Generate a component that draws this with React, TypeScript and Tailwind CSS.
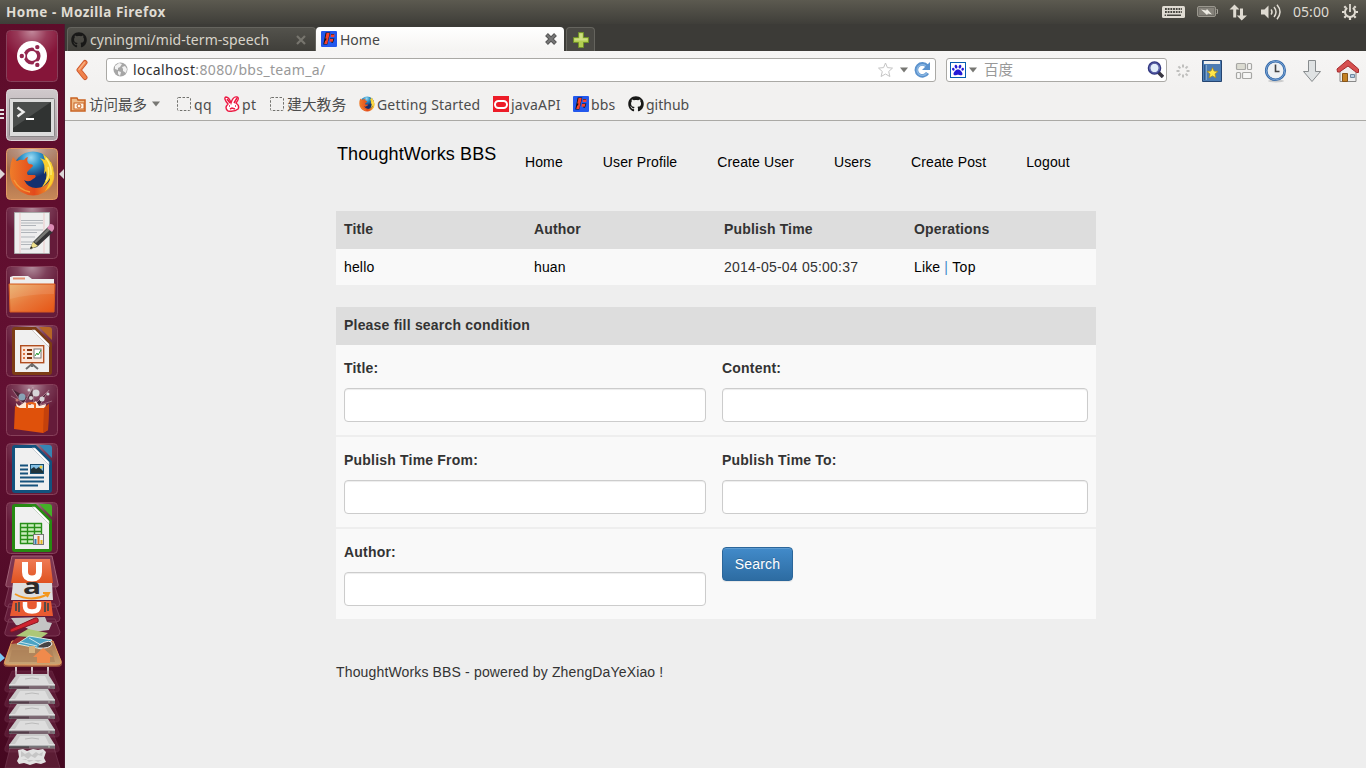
import type { ReactNode } from "react";
import { FaGithub, FaPaw } from "react-icons/fa";

const ui = "font-['Noto_Sans','Noto_Sans_CJK_SC',sans-serif]";

function TopBar() {
  return (
    <header className="flex h-6 shrink-0 items-center bg-gradient-to-b from-[#5c5a50] to-[#3f3e39] pl-1.5 text-[#dfdbd2]">
      <h1 className="text-[13.5px] leading-6 font-bold tracking-[0.48px]">Home - Mozilla Firefox</h1>
      <svg className="ml-auto" width="204" height="24" viewBox="1162 0 204 24">
        <rect x="1162" y="6" width="23" height="12" rx="1.5" fill="#dfdbd2" />
        <path d="M1165 9h17M1165 12h17" stroke="#45443e" strokeWidth="2" strokeDasharray="1.8 .9" />
        <path d="M1167 15.3h14M1164.6 15.3h1.5" stroke="#45443e" strokeWidth="1.6" />
        <rect x="1197.5" y="6.5" width="18" height="10" rx="1.5" fill="#6d6b64" stroke="#9a978e" />
        <path d="M1216.500 9.500h1v4h-1" fill="none" stroke="#aaa79e" />
        <rect x="1199" y="8" width="15" height="7" fill="#85827a" />
        <path d="M1201 9.500l5 1 1-1.500 5 5.500-4-1-1 1.500z" fill="#eceae2" />
        <path d="M1234.500 4.500l5 5h-3.300v8h-3v-8h-3.700zM1241.700 20.500l-5-5h3.300v-7h3v7h4z" fill="#dfdbd2" />
        <path d="M1261 9.500h3.500l4-4v13l-4-4h-3.500z" fill="#dfdbd2" />
        <path d="M1271 9.500q2 2.500 0 5M1274 7q4 5 0 10M1277 4.800q6 7 0 14.500" fill="none" stroke="#dfdbd2" strokeWidth="1.5" />
        <text x="1293" y="17" fontSize="14" textLength="36" fill="#dfdbd2">05:00</text>
        <g fill="none" stroke="#dfdbd2">
          <path d="M1347.200 7.800a5 5 0 1 0 5.600 0" strokeWidth="2" />
          <path d="M1350 4v8" strokeWidth="1.8" />
          <path d="M1344.500 12h-2.500M1358 12h-2.500M1346 16l-1.700 1.700M1354 16l1.700 1.700M1350 17v3M1345.800 7.800l-1.500-1.500M1354.200 7.800l1.500-1.500" strokeWidth="2.200" />
        </g>
      </svg>
    </header>
  );
}

function Tile({ children, kind = "plain" }: { children: ReactNode; kind?: "plain" | "ubuntu" | "terminal" | "firefox" }) {
  return (
    <svg width="65" height="59" viewBox="0 0 65 59" className="block shrink-0">
      <defs>
        <radialGradient id="gloss" cx=".5" cy="0" r=".6">
          <stop stopColor="#fff" stopOpacity=".5" />
          <stop offset=".5" stopColor="#fff" stopOpacity=".16" />
          <stop offset="1" stopColor="#fff" stopOpacity="0" />
        </radialGradient>
        <linearGradient id="silver" x2="0" y2="1"><stop stopColor="#d0c9cc" /><stop offset="1" stopColor="#aaa0a3" /></linearGradient>
        <linearGradient id="bronze" x2="0" y2="1"><stop stopColor="#aa7f69" /><stop offset=".4" stopColor="#a5694a" /><stop offset="1" stopColor="#c78959" /></linearGradient>
      </defs>
      <rect x="6.500" y="6.500" width="51" height="51" rx="4"
        fill={kind === "ubuntu" ? "#851539" : kind === "terminal" ? "url(#silver)" : kind === "firefox" ? "url(#bronze)" : "#651b3a"}
        stroke={kind === "terminal" ? "#ddd4d7" : kind === "firefox" ? "#e39a65" : "#87405a"} />
      {kind !== "terminal" && <rect x="7" y="7" width="50" height="50" rx="4" fill="url(#gloss)" />}
      {children}
    </svg>
  );
}

function OfficeDoc({ color, light, children }: { color: string; light: string; children: ReactNode }) {
  return (
    <>
      <path d="M12 11q0-3 3-3h21l16 16v29q0 3-3 3H15q-3 0-3-3z" fill={color} />
      <path d="M39 8h10q3 0 3 3v10z" fill={light} />
      <path d="M15 11h17l17 17v25H15z" fill="#f0f0f0" />
      <path d="M32 11l17 17v-3L35 11z" fill="#fff" stroke="#ccc" strokeWidth=".6" />
      {children}
    </>
  );
}

function FirefoxMark() {
  return (
    <g>
      <defs>
        <radialGradient id="globe" cx=".45" cy=".15"><stop stopColor="#9ddcf5" /><stop offset=".45" stopColor="#2f96cb" /><stop offset="1" stopColor="#14306e" /></radialGradient>
        <linearGradient id="fox" x1="0" x2="1"><stop stopColor="#ef7c2a" /><stop offset=".55" stopColor="#e34a1c" /><stop offset="1" stopColor="#f5a62d" /></linearGradient>
      </defs>
      <circle cx="33" cy="30" r="20.500" fill="url(#globe)" />
      <path d="M13 15Q15 18 17 19 21 17 24 18 26 15 28 15 26 19 29 22 33 22 33 24L28 29Q26 31 28 33L35 33Q37 35 33 37 29 41 24 38 28 46 36 46 45 46 50 38L54 29Q56 43 45 50 33 57 21 50 9 42 10 28 10 21 13 15z" fill="url(#fox)" />
      <path d="M43 12Q54 19 54 32 54 43 45 49 50 42 50 36 46 43 42 45 48 36 46 29L44 32Q46 21 40 16L45 18z" fill="#f8cd2e" />
      <path d="M46 16Q52 24 51 33M48 25Q50 34 46 39" fill="none" stroke="#fff07c" strokeWidth="1.400" />
      <path d="M14 38Q19 48 30 50" fill="none" stroke="#f49a3b" strokeWidth="1.500" />
    </g>
  );
}

function Drive() {
  return (
    <svg width="65" height="15" viewBox="0 0 65 15" className="block shrink-0 overflow-visible">
      <path d="M12 0h40l7 17q1 4-3 4H8q-4 0-3-4z" fill="#84415e" opacity=".3" stroke="#aa7088" strokeWidth=".7" />
      <path d="M17 3h31l7 11H9z" fill="#c9c9c9" /><path d="M20 5h25l4 8H15z" fill="#e2e2e2" opacity=".8" />
      <path d="M9 14h46v4H9z" fill="#77777a" /><path d="M9 15.500h20v2H9z" fill="#3d3d40" /><path d="M9 14h46" stroke="#f5f5f5" />
      <path d="M25 8q7-2 14 0" fill="none" stroke="#bbb" /><circle cx="49" cy="16" r=".8" fill="#c8e6c8" />
    </svg>
  );
}

function Stack() {
  return (
    <div className="flex flex-col">
      <svg width="65" height="122" viewBox="0 555 65 122" className="block shrink-0">
        <defs>
          <linearGradient id="orangeU" x2="0" y2="1"><stop stopColor="#ee7a55" /><stop offset="1" stopColor="#e0521f" /></linearGradient>
          <linearGradient id="box" x2="0" y2="1"><stop stopColor="#a8774f" /><stop offset="1" stopColor="#c9a575" /></linearGradient>
        </defs>
        <path d="M12 556h40l6 28q1 3-3 3H9q-4 0-3-3z" fill="#7e3650" stroke="#a26278" />
        <path d="M9 587h46l5 16q0 4-4 4H9q-5 0-4-4zM9 604h46l5 14q0 4-4 4H9q-5 0-4-4zM9 619h46l5 13q0 4-4 4H9q-5 0-4-4z" fill="#641c3a" stroke="#7d3a55" />
        <path d="M15 559h35l3 24H11z" fill="url(#orangeU)" />
        <path d="M25 562v10q0 6.500 7 6.500t7-6.500v-10" fill="none" stroke="#fff" strokeWidth="6" />
        <path d="M13 583h39l1 17H11z" fill="#dedede" />
        <text x="23" y="594" fontSize="22" fontWeight="bold" textLength="18" lengthAdjust="spacingAndGlyphs" fill="#2d2b2b">a</text>
        <path d="M15 594q16 9 33 0M43 593h6l-2 4" fill="none" stroke="#f4981d" strokeWidth="2" />
        <path d="M13 601h38l2 15H10z" fill="#e95a31" />
        <path d="M25 602v4q0 5.500 7 5.500t7-5.500v-4" fill="none" stroke="#fff" strokeWidth="4.500" />
        <path d="M16 603v8M19 602v10M45 602v10M48 603v8" stroke="#5a4a46" strokeWidth="2" />
        <path d="M11 618l34-1 2 5 5 1-3 7-16 2-8-5-9-2z" fill="#c4c4c4" />
        <path d="M16 636l12-7 20 4-7 5z" fill="#adc778" />
        <path d="M11 629l24-11q4-1 3 4l-26 10q-3 0-1-3z" fill="#cf2431" stroke="#861622" />
        <path d="M11 642h42l9 20q1 5-5 5H8q-6 0-4-5z" fill="#e8a45c" opacity=".45" />
        <path d="M12 641h41l8 20q1 4-5 4H9q-6 0-4-4z" fill="url(#box)" stroke="#e69b58" />
        <path d="M11 644q5-8 10-7l7 1v4z" fill="#992b30" />
        <path d="M17 644l12-8 23 4-10 9z" fill="#4aa3c3" stroke="#d9e8db" />
        <path d="M20 642l17 4M29 638l12 7" stroke="#cee5ec" />
        <path d="M39 645q12-7 13-1-2 5-14 4" fill="#444" stroke="#eee" />
        <path d="M12 650h40l3 12H9z" fill="#aa8057" opacity=".65" /><path d="M29 646h6v7h-6z" fill="#d5b27e" />
        <path d="M43 648l10 9h-3v6H37v-6h-4z" fill="#f08a4c" />
        <path d="M16 667v8h32v-8M32 667v8" fill="none" stroke="#eee" strokeWidth="1.600" />
        <path d="M0 653l5 5-5 4z" fill="#79c8f4" />
      </svg>
      <div className="-mt-1.5 flex flex-col"><Drive /><Drive /><Drive /><Drive /><Drive /></div>
      <svg width="65" height="23" viewBox="0 0 65 23" className="block shrink-0">
        <path d="M10 2h44l6 20H5z" fill="#703047" opacity=".5" stroke="#8e536b" />
        <path d="M18 4l5-1 4 2 6-2 5 1 5-1 3 3-2 6 2 4-5 2-5-1-6 2-6-2-5 1-2-3 2-4z" fill="#e2e2e2" />
        <path d="M21 5l4 3 4-2 3 3 4-3 3 2 4-2-1 4-4-1-3 3-4-2-3 3-4-3-3 1zM22 14l4-1 3 3 5-2 4 2 4-2" fill="#aaa9aa" opacity=".5" />
      </svg>
    </div>
  );
}

function Launcher() {
  return (
    <aside className="h-[744px] w-[65px] shrink-0 overflow-hidden border-r border-[#4c1930] bg-gradient-to-b from-[#5e0c2a] via-[#621032] to-[#450820]">
      <Tile kind="ubuntu">
        <circle cx="32" cy="32" r="15" fill="#fff" />
        <circle cx="32" cy="32" r="6.800" fill="none" stroke="#93274e" strokeWidth="3.500" />
        <g fill="#fff"><circle cx="21.800" cy="32" r="3.700" /><circle cx="37.300" cy="23.100" r="3.700" /><circle cx="37.300" cy="40.900" r="3.700" /></g>
        <g fill="#93274e"><circle cx="21.800" cy="32" r="2.200" /><circle cx="37.300" cy="23.100" r="2.200" /><circle cx="37.300" cy="40.900" r="2.200" /></g>
      </Tile>
      <Tile kind="terminal">
        <path d="M0 27h4M0 31h4M0 35h4" stroke="#e5dfe1" strokeWidth="2" />
        <rect x="9.500" y="15.500" width="45" height="38" rx="1" fill="#dcdcdc" stroke="#8a8688" />
        <rect x="13" y="19" width="38" height="30" fill="#303332" /><path d="M13 19h38L13 45z" fill="#4a4d4c" />
        <path d="M17.500 24.500l6 4.500-6 4.500" fill="none" stroke="#eee" strokeWidth="2.400" /><path d="M26 36h8" stroke="#fff" strokeWidth="2" />
      </Tile>
      <Tile kind="firefox">
        <path d="M0 27l5 5-5 5zM64 27l-5 5 5 5z" fill="#ddd6d8" /><FirefoxMark />
      </Tile>
      <Tile>
        <path d="M14.500 11.500h35v41h-35z" fill="#eee" stroke="#aaa" />
        <path d="M20 12v40M44 12v40" stroke="#ebb9b9" strokeWidth=".7" />
        <path d="M21 19.500h22M21 22h22M21 24.500h15M21 29h22M21 31.500h16M21 36h14M21 41h14M21 43.500h13M21 48h11" stroke="#b1b5ba" />
        <path d="M30 48l3-7L48 26l5 5-16 15z" fill="#333435" /><path d="M34 41L48 27l2 2-14 13z" fill="#777975" /><path d="M30 48l3-7 5 4z" fill="#eee08c" /><path d="M47 27l3-4q5 0 4 5l-2 3z" fill="#dc8cb5" /><path d="M30 48l1-3 2 2z" fill="#222" />
      </Tile>
      <Tile>
        <defs><linearGradient id="folder" x2="1" y2="1"><stop stopColor="#e9b06a" /><stop offset=".5" stopColor="#e8793b" /><stop offset="1" stopColor="#e65414" /></linearGradient></defs>
        <path d="M10 17l3-1h15l4 3h22v7H10z" fill="#eee" /><path d="M13 17.500h12v2H13z" fill="#e49271" />
        <path d="M9 24h46l-1 28H10z" fill="url(#folder)" stroke="#d65b22" /><path d="M10 25h44v9q-25 0-44 5z" fill="#fff" opacity=".1" />
      </Tile>
      <Tile>
        <OfficeDoc color="#7c3c15" light="#b56626">
          <path d="M32 43v5M26 50l6-5 6 5" fill="none" stroke="#6c6c6c" strokeWidth="2" />
          <rect x="20.700" y="26.700" width="23" height="17" fill="#fbe6da" stroke="#b14e20" strokeWidth="1.400" />
          <path d="M23 31h2M23 35h2M23 39h2" stroke="#dd7440" strokeWidth="2" /><path d="M27 31h5M27 35h5M27 39h5" stroke="#803410" strokeWidth="2" />
          <rect x="34" y="30" width="7" height="9" fill="#fff" stroke="#777" /><path d="M35 37l2-3 1 2 3-5" fill="none" stroke="#2a9b37" />
        </OfficeDoc>
      </Tile>
      <Tile>
        <path d="M12 11l11 16L33 9l1 18L49 12l-9 15M11 18l16 9M52 23l-12 4" stroke="#dbc2c9" opacity=".4" />
        <g fill="#d7d5d8"><circle cx="22" cy="19" r="3.500" fill="#88a2b5" /><circle cx="36" cy="15" r="3.500" /><circle cx="29" cy="12" r="1.500" /><circle cx="42" cy="21" r="2.500" /><circle cx="48" cy="16" r="1.500" /><circle cx="17" cy="22" r="1.500" fill="#c67972" /><circle cx="31" cy="20" r="2" /></g>
        <path d="M16 25l3 3 6-4 5 3 6-4 3 5 7-2-1 5H17z" fill="#ffe9d5" />
        <path d="M15 28l5 2h24l5-4-1 26-5 3-29-4z" fill="#df510b" /><path d="M44 30l5-4-1 26-5 3z" fill="#c4410c" />
        <path d="M27 31v-5q4-2 8 0v5" fill="none" stroke="#ea6117" strokeWidth="2" />
      </Tile>
      <Tile>
        <OfficeDoc color="#12527e" light="#3684b3">
          <path d="M20 28.500h8M20 32.500h8M20 36.500h8M20 40.500h24M20 44.500h24M20 48.500h18" stroke="#16527c" strokeWidth="2" />
          <rect x="30.500" y="27.500" width="13" height="9" fill="#83bfe4" stroke="#194e70" /><path d="M31 36v-4l3-2 2 2 3-2 4 4v2z" fill="#20343b" /><circle cx="41" cy="30" r="1.500" fill="#f2cb3f" />
        </OfficeDoc>
      </Tile>
      <Tile>
        <OfficeDoc color="#278a12" light="#45af28">
          <rect x="20" y="27" width="22" height="21" fill="#caecbc" /><path d="M20 27.500h22M20 31.500h22M20 35.500h22M20 39.500h22M20 43.500h22M20.500 27v21M27.500 27v21M34.500 27v21M41.500 27v21M20 47.500h22" stroke="#278f19" strokeWidth="1.400" />
          <rect x="33.500" y="38.500" width="10" height="10" fill="#eee" stroke="#777" /><path d="M35.500 48v-5" stroke="#347cb0" strokeWidth="2" /><path d="M38.500 48v-8" stroke="#df7625" strokeWidth="2" /><path d="M41.500 48v-4" stroke="#e1b922" strokeWidth="2" />
        </OfficeDoc>
      </Tile>
      <Stack />
    </aside>
  );
}

function BbsIcon() {
  return (
    <svg width="16" height="16" viewBox="0 0 16 16" className="block shrink-0">
      <rect width="16" height="16" rx="1" fill="#2358ed" />
      <path d="M5.500 2.500h2.500L5.500 12.500H3.500zM10 4h3M9 8.500h3l-1 3" fill="#111" stroke="#111" strokeWidth="2" />
      <path d="M5.500 2h3.200L6.200 13H3.200l1-3.500h.8l.5-2H4.300zM10 3.500h3.800l-.6 2.500h-3.500zM9 8h3.400l-.7 2.700H8.400z" fill="#f4402f" />
    </svg>
  );
}

function Arrow() {
  return <svg width="8" height="6" viewBox="0 0 8 6" className="block shrink-0"><path d="M0 .5h8L4 5.500z" fill="#777773" /></svg>;
}

function TabStrip() {
  return (
    <div className="flex h-[27px] shrink-0 items-end bg-[#3c3b37] pl-0.5">
      <div className="flex h-6 w-[249px] items-center rounded-t-[4px] border border-b-0 border-[#65645e] bg-gradient-to-b from-[#53524c] to-[#403f3a] pl-[3px] pr-[9px] text-[#d8d4ca]">
        <FaGithub size={16} color="#181817" />
        <span className="ml-[3px] text-[14px] tracking-[0.05px]">cyningmi/mid-term-speech</span>
        <svg className="ml-auto" width="10" height="10" viewBox="0 0 10 10"><path d="M1 1l8 8M9 1L1 9" stroke="#77756e" strokeWidth="2.200" /></svg>
      </div>
      <div className="flex h-6 w-[248px] items-center rounded-t-[4px] bg-gradient-to-b from-white to-[#f5f4f2] pl-[5px] pr-1.5 text-[#474747]">
        <BbsIcon />
        <span className="ml-[3px] text-[14px]">Home</span>
        <svg className="ml-auto" width="14" height="14" viewBox="0 0 14 14"><path d="M2.500 2.500l9 9M11.500 2.500l-9 9" stroke="#555" strokeWidth="4" /><path d="M3 3l8 8M11 3l-8 8" stroke="#777" strokeWidth="2" /></svg>
      </div>
      <div className="ml-0.5 flex h-6 w-[29px] items-center justify-center rounded-t-[4px] border border-b-0 border-[#65645e] bg-[#4a4944]">
        <svg width="16" height="16" viewBox="0 0 16 16"><path d="M5.500.5h5v5h5v5h-5v5h-5v-5h-5v-5h5z" fill="#b4cf52" stroke="#71922a" /><path d="M6.500 1.500h3v5h5v2h-13v-2h5z" fill="#cedf83" /></svg>
      </div>
    </div>
  );
}

function NavBar() {
  return (
    <div className="flex h-[37px] shrink-0 items-center bg-gradient-to-b from-[#f6f5f4] to-[#f2f1f0] pl-2.5">
      <svg width="15" height="22" viewBox="0 0 15 22" className="mr-4 block shrink-0"><g fill="none" strokeLinecap="round" strokeLinejoin="round"><path d="M10 3.500L4 11l6 7.500" stroke="#c9542a" strokeWidth="5" /><path d="M10 3.500L4 11l6 7.500" stroke="#f0824b" strokeWidth="3.400" /><path d="M9.500 3.500L4 10.500" stroke="#f7b083" strokeWidth="1.400" /></g></svg>
      <div className="flex h-6 w-[830px] items-center rounded-[3px] border border-[#aaa9a5] bg-white pl-1.5 pr-1">
        <svg width="15" height="15" viewBox="0 0 15 15" className="shrink-0"><circle cx="7.500" cy="7.500" r="7" fill="#a6a6a6" /><path d="M2 4l4-3 3 1-2 3-2 1v2L2 7zM9 5l3-1 2 3-1 4-3-2V7zM5 9l3 1-1 4-2-2z" fill="#fff" opacity=".85" /></svg>
        <span className="ml-[5px] text-[14px] tracking-[0.35px] text-[#999]"><span className="text-[#303030]">localhost</span>:8080/bbs_team_a/</span>
        <svg className="ml-auto mr-1.5 shrink-0" width="17" height="16" viewBox="0 0 16 16"><path d="M8 1l1.900 4.600 5.100.5-3.800 3.400 1.200 5L8 12l-4.400 2.500 1.200-5L1 6.100l5.100-.5z" fill="#fff" stroke="#c4c4c4" /></svg>
        <Arrow />
        <svg className="ml-1.5 mr-px shrink-0" width="16" height="16" viewBox="0 0 16 16"><path d="M13.500 11a6 6 0 1 1-.5-7" fill="none" stroke="#5b92cd" strokeWidth="3.600" /><path d="M16 0v8H8l3-3z" fill="#5b92cd" /><path d="M12.800 11a5.300 5.300 0 1 1-1-7" fill="none" stroke="#8ab6e2" strokeWidth="1.500" /></svg>
      </div>
      <div className="ml-2.5 flex h-6 w-[221px] items-center rounded-[3px] border border-[#aaa9a5] bg-white pl-[3px] pr-0.5">
        <div className="flex size-4 shrink-0 items-center justify-center border border-[#075db1] text-[#251bd8]"><FaPaw size={12} /></div>
        <div className="ml-[3px]"><Arrow /></div>
        <span className="ml-[7px] text-[14.5px] text-[#999]">百度</span>
        <svg className="ml-auto shrink-0" width="17" height="17" viewBox="0 0 17 17"><path d="M11 11l5 5" stroke="#383641" strokeWidth="3.500" /><circle cx="7.500" cy="7" r="5.500" fill="#e1edfa" stroke="#30367f" strokeWidth="2.600" /><circle cx="7.500" cy="7" r="5" fill="none" stroke="#6971b8" /></svg>
      </div>
      <svg className="shrink-0" width="199" height="36" viewBox="1167 51 199 36">
        <g stroke="#bfbfbd" strokeWidth="2"><path d="M1183 63.500v3M1183 73.500v3M1176.500 70h3M1186.500 70h3" /><path d="M1178.400 65.400l2 2M1185.600 72.600l2 2M1187.600 65.400l-2 2M1180.400 72.600l-2 2" /></g>
        <path d="M1202.500 59.500h19v21h-19z" fill="#4b7cb3" stroke="#254571" /><path d="M1204 60h16v3h-16z" fill="#eef0ed" /><path d="M1204.500 64v15" stroke="#2d5789" /><path d="M1206.500 64v15" stroke="#7fa5cb" /><path d="M1212.500 66.500l1.500 3.500 4 .4-3 2.500 1 4-3.500-2-3.500 2 1-4-3-2.500 4-.4z" fill="#ffe64a" stroke="#a3841c" strokeWidth=".7" />
        <g fill="#f7f7f6" stroke="#a7a7a4" strokeWidth="1.200"><rect x="1236.500" y="62.500" width="9" height="6" rx="1" fill="#dcdcd2" /><rect x="1247.500" y="62.500" width="4" height="6" rx="1" /><rect x="1236.500" y="71.500" width="4" height="6" rx="1" /><rect x="1242.500" y="71.500" width="9" height="6" rx="1" /></g>
        <ellipse cx="1276" cy="80" rx="8" ry="1.500" fill="#ccc" /><circle cx="1275.500" cy="69.500" r="9.300" fill="#eef1f3" stroke="#3469a8" strokeWidth="2.600" /><circle cx="1275.500" cy="69.500" r="9.300" fill="none" stroke="#86b0df" strokeWidth=".8" /><path d="M1275.500 63.500v7h4" fill="none" stroke="#444" strokeWidth="1.600" />
        <path d="M1308.500 59.500h7v11h5l-8.500 10-8.500-10h5z" fill="#dfe2e3" stroke="#878b8d" />
        <path d="M1340 68l8-7 8 7v12.500h-16z" fill="#eee" stroke="#888" /><path d="M1337.500 71l-.5-3 10-8.500 1-.5 10.500 9v3.500h-2L1348 65l-8.500 6z" fill="#d64f4f" stroke="#a52b2d" /><path d="M1342.500 72.500h5v8h-5z" fill="#c38124" stroke="#86551a" /><path d="M1350.500 73.500h4v3h-4z" fill="#b7cee3" stroke="#7189a0" />
      </svg>
    </div>
  );
}

function Placeholder() {
  return <svg width="14" height="14" viewBox="0 0 14 14" className="shrink-0"><rect x=".5" y=".5" width="13" height="13" rx="1" fill="none" stroke="#72726e" strokeDasharray="2.500 1.500" /></svg>;
}

function Bookmarks() {
  return (
    <div className="flex h-[33px] shrink-0 items-center border-b border-[#aaa9a5] bg-[#f2f1f0] pl-[5px] text-[14px] text-[#4c4c4c]">
      <div className="flex w-[107px] items-center">
        <svg width="16" height="16" viewBox="0 0 16 16" className="shrink-0"><path d="M1 2h6l1 2h7v11H1z" fill="#eebb88" stroke="#c96220" strokeWidth="1.500" /><rect x="4" y="7" width="10" height="6" fill="#fff4e6" stroke="#c96220" /><circle cx="9" cy="10" r="2" fill="none" stroke="#c96220" /></svg>
        <span className="mt-px ml-[3px] mr-[5px] text-[14.500px] whitespace-nowrap">访问最多</span><Arrow />
      </div>
      <div className="flex w-[47px] items-center gap-[3px]"><Placeholder /><span className="tracking-[0.4px]">qq</span></div>
      <div className="flex w-[46px] items-center gap-0.5"><svg width="16" height="16" viewBox="0 0 16 16" className="shrink-0"><path d="M4 8Q-1 2 2 1q3 0 5 6 2-7 6-6 3 1-1 6 4 3 2 6-3 3-10 2-4-3 0-7z" fill="#fff" stroke="#ec1942" strokeWidth="1.400" /><path d="M3 3l3 4M13 2l-3 5M5 10h1M11 10h1M6 13l2-1 3 1" stroke="#ec1942" strokeWidth="1.500" fill="none" /></svg><span className="tracking-[0.5px]">pt</span></div>
      <div className="flex w-[89px] items-center gap-[3px]"><Placeholder /><span className="mt-px text-[14.800px] whitespace-nowrap">建大教务</span></div>
      <div className="flex w-[134px] items-center gap-0.5"><svg width="16" height="16" viewBox="9 8 47 47" className="shrink-0"><FirefoxMark /></svg><span className="text-[14px] whitespace-nowrap tracking-[0.18px]">Getting Started</span></div>
      <div className="flex w-20 items-center gap-0.5"><svg width="16" height="16" viewBox="0 0 16 16" className="shrink-0"><rect width="16" height="16" fill="#ed1c28" /><rect x="2" y="5" width="12" height="7" rx="3.500" fill="none" stroke="#fff" strokeWidth="2" /></svg><span className="tracking-[0.15px]">javaAPI</span></div>
      <div className="flex w-[55px] items-center gap-0.5"><BbsIcon /><span className="tracking-[0.15px]">bbs</span></div>
      <div className="flex items-center gap-0.5"><FaGithub size={16} color="#181817" /><span>github</span></div>
    </div>
  );
}

function Field({ label }: { label: string }) {
  return (
    <label className="flex flex-col gap-2.5 px-2 pt-[13px]">
      <span className="h-5 leading-5 font-bold tracking-[0.2px]">{label}</span>
      <input className="block h-[34px] w-full rounded-[4px] border border-[#ccc] bg-white px-3 shadow-[inset_0_1px_1px_rgba(0,0,0,0.075)] outline-none" />
    </label>
  );
}

const links = ["Home", "User Profile", "Create User", "Users", "Create Post", "Logout"];

function Page() {
  return (
    <main className="flex-1 overflow-hidden bg-[#eee] pl-[271px] font-['Liberation_Sans',sans-serif] text-[14px] leading-5 tracking-[0.15px] text-[#333]">
      <div className="w-[760px]">
        <nav className="flex h-[90px] text-black">
          <a className="w-[169px] shrink-0 pt-[23px] pl-px text-[18px] whitespace-nowrap tracking-[0.1px]">ThoughtWorks BBS</a>
          <ul className="flex pt-[31px] tracking-[0.11px]">
            {links.map((l) => <li key={l} className="px-5 whitespace-nowrap">{l}</li>)}
          </ul>
        </nav>
        <div className="grid h-[38px] grid-cols-4 items-center bg-[#ddd] pb-0.5 font-bold *:pl-2">
          <span>Title</span><span>Author</span><span>Publish Time</span><span>Operations</span>
        </div>
        <div className="grid h-9 grid-cols-4 items-center bg-[#f9f9f9] *:pl-2">
          <a className="text-black">hello</a><a className="text-black">huan</a><span className="tracking-[0.22px]">2014-05-04 05:00:37</span>
          <span className="text-[#428bca]"><a className="text-black">Like</a> | <a className="tracking-[0.4px] text-black">Top</a></span>
        </div>
        <form className="mt-[22px] flex flex-col">
          <h2 className="flex h-[38px] items-center bg-[#ddd] pb-0.5 pl-2 font-bold tracking-[0.2px]">Please fill search condition</h2>
          <div className="flex flex-col gap-0.5 *:grid *:h-[90px] *:grid-cols-[378px_382px] *:bg-[#f9f9f9]">
            <div><Field label="Title:" /><Field label="Content:" /></div>
            <div><Field label="Publish Time From:" /><Field label="Publish Time To:" /></div>
            <div>
              <Field label="Author:" />
              <div className="px-2 pt-[18px]">
                <button type="button" className="h-[34px] w-[71px] rounded-[4px] border border-[#2b669a] bg-gradient-to-b from-[#428bca] to-[#2d6ca2] text-white shadow-[inset_0_1px_0_rgba(255,255,255,0.15),0_1px_1px_rgba(0,0,0,0.075)] [text-shadow:0_-1px_0_rgba(0,0,0,0.2)]">Search</button>
              </div>
            </div>
          </div>
        </form>
        <footer className="mt-[43px]">ThoughtWorks BBS - powered by ZhengDaYeXiao !</footer>
      </div>
    </main>
  );
}

export default function App() {
  return (
    <div className={`flex h-[768px] w-[1366px] flex-col overflow-hidden ${ui}`}>
      <TopBar />
      <div className="flex min-h-0 flex-1">
        <Launcher />
        <div className="flex min-w-0 flex-1 flex-col">
          <TabStrip />
          <NavBar />
          <Bookmarks />
          <Page />
        </div>
      </div>
    </div>
  );
}
